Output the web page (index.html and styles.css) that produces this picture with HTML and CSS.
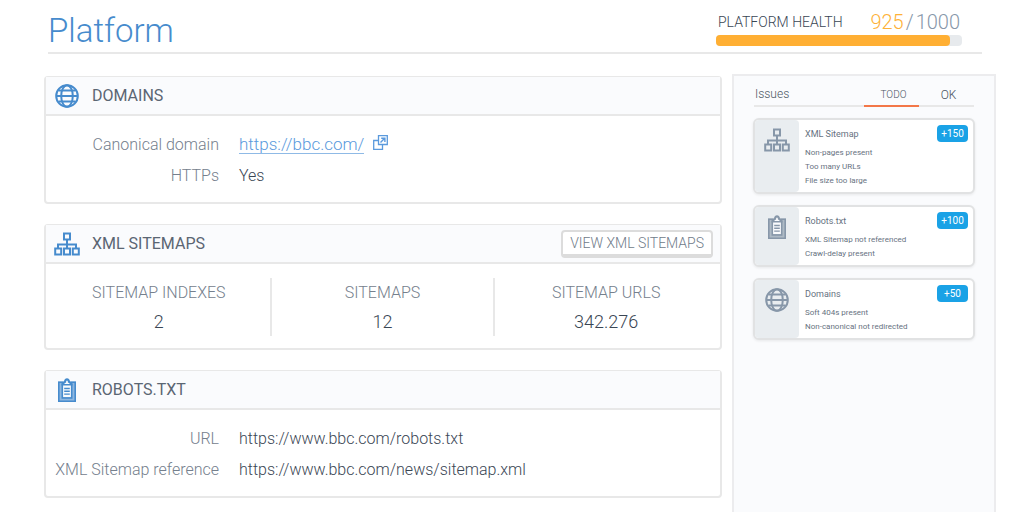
FILE: index.html
```html
<!DOCTYPE html>
<html lang="en">
<head>
  <meta charset="UTF-8">
  <meta name="viewport" content="width=device-width, initial-scale=1.0">
  <title>Platform</title>
  <link rel="stylesheet" href="styles.css">
</head>
<body>
  <svg class="sprite" aria-hidden="true">
    <symbol id="globe" viewBox="0 0 24 24">
      <g fill="none" stroke="currentColor" stroke-width="2">
        <circle cx="12" cy="12" r="10.8"/>
        <ellipse cx="12" cy="12" rx="5.8" ry="10.8"/>
        <path d="M1.5 12h21M3.5 6.500h17M3.5 17.500h17"/>
      </g>
    </symbol>
    <symbol id="sitemap" viewBox="0 0 26 24">
      <g fill="none" stroke="currentColor" stroke-width="2">
        <rect x="10" y="1.5" width="6" height="6"/>
        <path d="M13 7.500v9M4 16.500v-4h18v4"/>
        <rect x="1.2" y="16.5" width="6" height="6"/>
        <rect x="10" y="16.5" width="6" height="6"/>
        <rect x="18.8" y="16.5" width="6" height="6"/>
      </g>
    </symbol>
    <symbol id="clipboard" viewBox="0 0 18 24">
      <path fill="currentColor" fill-opacity="0.6" d="M0 3.500h18V24H0z"/>
      <path fill="#fafbfd" d="M5 7h8v12H5z"/>
      <g fill="none" stroke="currentColor">
        <path stroke-width="1.6" d="M5 4.300H.8v18.900h16.400V4.300H13"/>
        <path stroke-width="1.6" d="M4.300 6v14h9.400V6"/>
        <path stroke-width="1.4" d="M6.200 10.500h5.600M6.200 13.300h5.600M6.200 16.100h5.600"/>
      </g>
      <path fill="currentColor" d="M3.500 7.500V4.700L6 3.200C6.300 1.300 7.500.3 9 .3s2.700 1 3 2.900l2.500 1.500v2.800z"/>
      <path fill="#fafbfd" d="M6.500 5.900V5.200l1.600-.8c0-1.200.2-2 .9-2s.9.800.9 2l1.600.8v.7z"/>
    </symbol>
    <symbol id="external" viewBox="0 0 15 15">
      <g fill="none" stroke="currentColor">
        <path stroke-width="1.3" d="M5.500.7h8.800v8.800H5.500z"/>
        <path stroke-width="1.3" d="M5.500 5.500H.7v8.800h8.800V9.500"/>
        <path stroke-width="1.4" d="M7.500 7.500l4.200-4.200M8.200 3.200h3.700v3.700"/>
      </g>
    </symbol>
  </svg>

  <header class="page-header">
    <h1>Platform</h1>
    <div class="health">
      <div class="health-top">
        <span class="health-label">PLATFORM HEALTH</span>
        <span class="score"><span class="score-value">925</span><span>/</span><span>1000</span></span>
      </div>
      <div class="bar"><div class="bar-fill" style="width: 95%"></div></div>
    </div>
  </header>

  <div class="content">
    <main class="cards">
      <section class="card">
        <div class="card-header">
          <svg class="icon"><use href="#globe"/></svg>
          <h2>DOMAINS</h2>
        </div>
        <dl class="details">
          <dt>Canonical domain</dt>
          <dd>
            <a href="https://bbc.com/">https://bbc.com/</a>
            <svg class="icon-external"><use href="#external"/></svg>
          </dd>
          <dt>HTTPs</dt>
          <dd>Yes</dd>
        </dl>
      </section>

      <section class="card">
        <div class="card-header">
          <svg class="icon"><use href="#sitemap"/></svg>
          <h2>XML SITEMAPS</h2>
          <button class="view-btn" type="button">VIEW XML SITEMAPS</button>
        </div>
        <dl class="stats">
          <div class="stat">
            <dt>SITEMAP INDEXES</dt>
            <dd>2</dd>
          </div>
          <div class="stat">
            <dt>SITEMAPS</dt>
            <dd>12</dd>
          </div>
          <div class="stat">
            <dt>SITEMAP URLS</dt>
            <dd>342.276</dd>
          </div>
        </dl>
      </section>

      <section class="card">
        <div class="card-header">
          <svg class="icon"><use href="#clipboard"/></svg>
          <h2>ROBOTS.TXT</h2>
        </div>
        <dl class="details">
          <dt>URL</dt>
          <dd>https://www.bbc.com/robots.txt</dd>
          <dt>XML Sitemap reference</dt>
          <dd>https://www.bbc.com/news/sitemap.xml</dd>
        </dl>
      </section>
    </main>

    <aside class="sidebar">
      <div class="tabs">
        <h2>Issues</h2>
        <button class="tab active" type="button">TODO</button>
        <button class="tab" type="button">OK</button>
      </div>

      <article class="issue">
        <div class="issue-icon"><svg class="icon"><use href="#sitemap"/></svg></div>
        <div class="issue-body">
          <h3>XML Sitemap</h3>
          <ul>
            <li>Non-pages present</li>
            <li>Too many URLs</li>
            <li>File size too large</li>
          </ul>
        </div>
        <span class="badge">+150</span>
      </article>

      <article class="issue">
        <div class="issue-icon"><svg class="icon"><use href="#clipboard"/></svg></div>
        <div class="issue-body">
          <h3>Robots.txt</h3>
          <ul>
            <li>XML Sitemap not referenced</li>
            <li>Crawl-delay present</li>
          </ul>
        </div>
        <span class="badge">+100</span>
      </article>

      <article class="issue">
        <div class="issue-icon"><svg class="icon"><use href="#globe"/></svg></div>
        <div class="issue-body">
          <h3>Domains</h3>
          <ul>
            <li>Soft 404s present</li>
            <li>Non-canonical not redirected</li>
          </ul>
        </div>
        <span class="badge">+50</span>
      </article>
    </aside>
  </div>
</body>
</html>
```

FILE: styles.css
```css
* {
  box-sizing: border-box;
}
body {
  margin: 0;
  min-height: 100vh;
  display: flex;
  flex-direction: column;
  background: #fff;
  color: #3a4654;
  font-family: Roboto, sans-serif;
  font-size: 16px;
  font-weight: 300;
}
h1, h2, h3, dl, dd, ul {
  margin: 0;
  padding: 0;
}
button {
  font-family: inherit;
  font-weight: 300;
  cursor: pointer;
}
.sprite {
  display: none;
}

/* header */
.page-header {
  display: flex;
  justify-content: space-between;
  margin: 0 42px 0 48px;
  padding: 8px 20px 0 0;
  border-bottom: 2px solid #e8e8e8;
}
h1 {
  padding-top: 2px;
  color: #468bcd;
  font-size: 33px;
  font-weight: 300;
  line-height: 42px;
}
.health {
  width: 246px;
}
.health-top {
  display: flex;
  justify-content: space-between;
  align-items: center;
  height: 27px;
  padding: 0 2px;
}
.health-label {
  font-size: 14px;
}
.score {
  display: flex;
  gap: 2px;
  color: #8797a9;
  font-size: 20px;
}
.score-value {
  color: #feb137;
}
.bar {
  height: 11px;
  border-radius: 4px;
  background: #e7eaed;
}
.bar-fill {
  height: 100%;
  border-radius: 4px;
  background: #ffaf33;
}

/* cards */
.content {
  flex: 1;
  display: flex;
  gap: 10px;
  padding: 20px 28px 0 44px;
}
.cards {
  flex: 1;
  display: flex;
  flex-direction: column;
  gap: 20px;
  padding: 2px 0 14px;
}
.card {
  border: 2px solid #e8e8e8;
  border-top-width: 1px;
  border-radius: 4px;
}
.card-header {
  display: flex;
  align-items: center;
  height: 39px;
  padding: 0 7px 0 8px;
  border-bottom: 2px solid #e8e8e8;
  background: #fafbfd;
}
.card-header h2 {
  margin-left: 12px;
  color: #5b6673;
  font-size: 16px;
  font-weight: 400;
}
.icon {
  width: 26px;
  height: 24px;
  color: #468bcd;
}
.view-btn {
  height: 28px;
  margin-left: auto;
  padding: 0 7px;
  border: 2px solid #dcdcdc;
  border-bottom-width: 4px;
  border-radius: 4px;
  background: #fff;
  color: #6f7b89;
  font-size: 14px;
}
.details {
  display: grid;
  grid-template-columns: 173px 1fr;
  column-gap: 20px;
  padding: 13px 0 11px;
  line-height: 31px;
}
.details dt {
  color: #75808d;
  text-align: right;
}
.details dd {
  display: flex;
  align-items: center;
}
.details a {
  border-bottom: 1px solid #8fbae6;
  color: #5b9add;
  font-size: 17px;
  line-height: 18px;
  text-decoration: none;
}
.icon-external {
  width: 15px;
  height: 15px;
  margin: 0 0 4px 9px;
  color: #5b9add;
}
.stats {
  display: flex;
  padding: 14px 3px 12px 2px;
  line-height: 29px;
  text-align: center;
}
.stat {
  flex: 1;
  border-right: 2px solid #e8e8e8;
}
.stat:last-child {
  border-right: 0;
}
.stat dt {
  color: #75808d;
}
.stat dd {
  font-size: 18px;
}

/* issues */
.sidebar {
  width: 264px;
  padding: 8px 20px;
  border: 2px solid #ececee;
  border-bottom: 0;
  background: #fafbfd;
}
.tabs {
  display: flex;
  height: 23px;
  margin-bottom: 11px;
  border-bottom: 2px solid #e8e8e8;
}
.tabs h2 {
  flex: 1;
  padding-left: 1px;
  color: #4a5563;
  font-size: 12px;
  font-weight: 300;
  line-height: 21px;
}
.tab {
  width: 55px;
  height: 23px;
  padding: 0 0 2px 4px;
  border: 0;
  background: none;
  color: #4a5563;
  font-size: 12px;
}
.tab.active {
  padding-bottom: 0;
  border-bottom: 2px solid #f37748;
  font-size: 10px;
}
.issue {
  display: flex;
  align-items: flex-start;
  margin: 0 -1px 11px;
  border: 2px solid #e1e2e3;
  border-radius: 6px;
  background: #fff;
  box-shadow: 0 1px 3px rgba(0, 0, 0, 0.08);
}
.issue-icon {
  align-self: stretch;
  width: 44px;
  padding: 8px 9px 0;
  border-radius: 4px;
  background: #e9edf0;
}
.issue-icon .icon {
  color: #8797a9;
}
.issue-body {
  flex: 1;
  padding: 6px 0 4px 6px;
  color: #67727f;
  font-weight: 400;
}
.issue h3 {
  margin-bottom: 4px;
  font-size: 9px;
  font-weight: 400;
  line-height: 16px;
}
.issue ul {
  list-style: none;
  font-size: 8px;
  line-height: 14px;
}
.badge {
  width: 31px;
  margin: 5px;
  border-radius: 4px;
  background: #1aa2e6;
  color: #fff;
  font-size: 10px;
  font-weight: 400;
  line-height: 17px;
  text-align: center;
}
```
